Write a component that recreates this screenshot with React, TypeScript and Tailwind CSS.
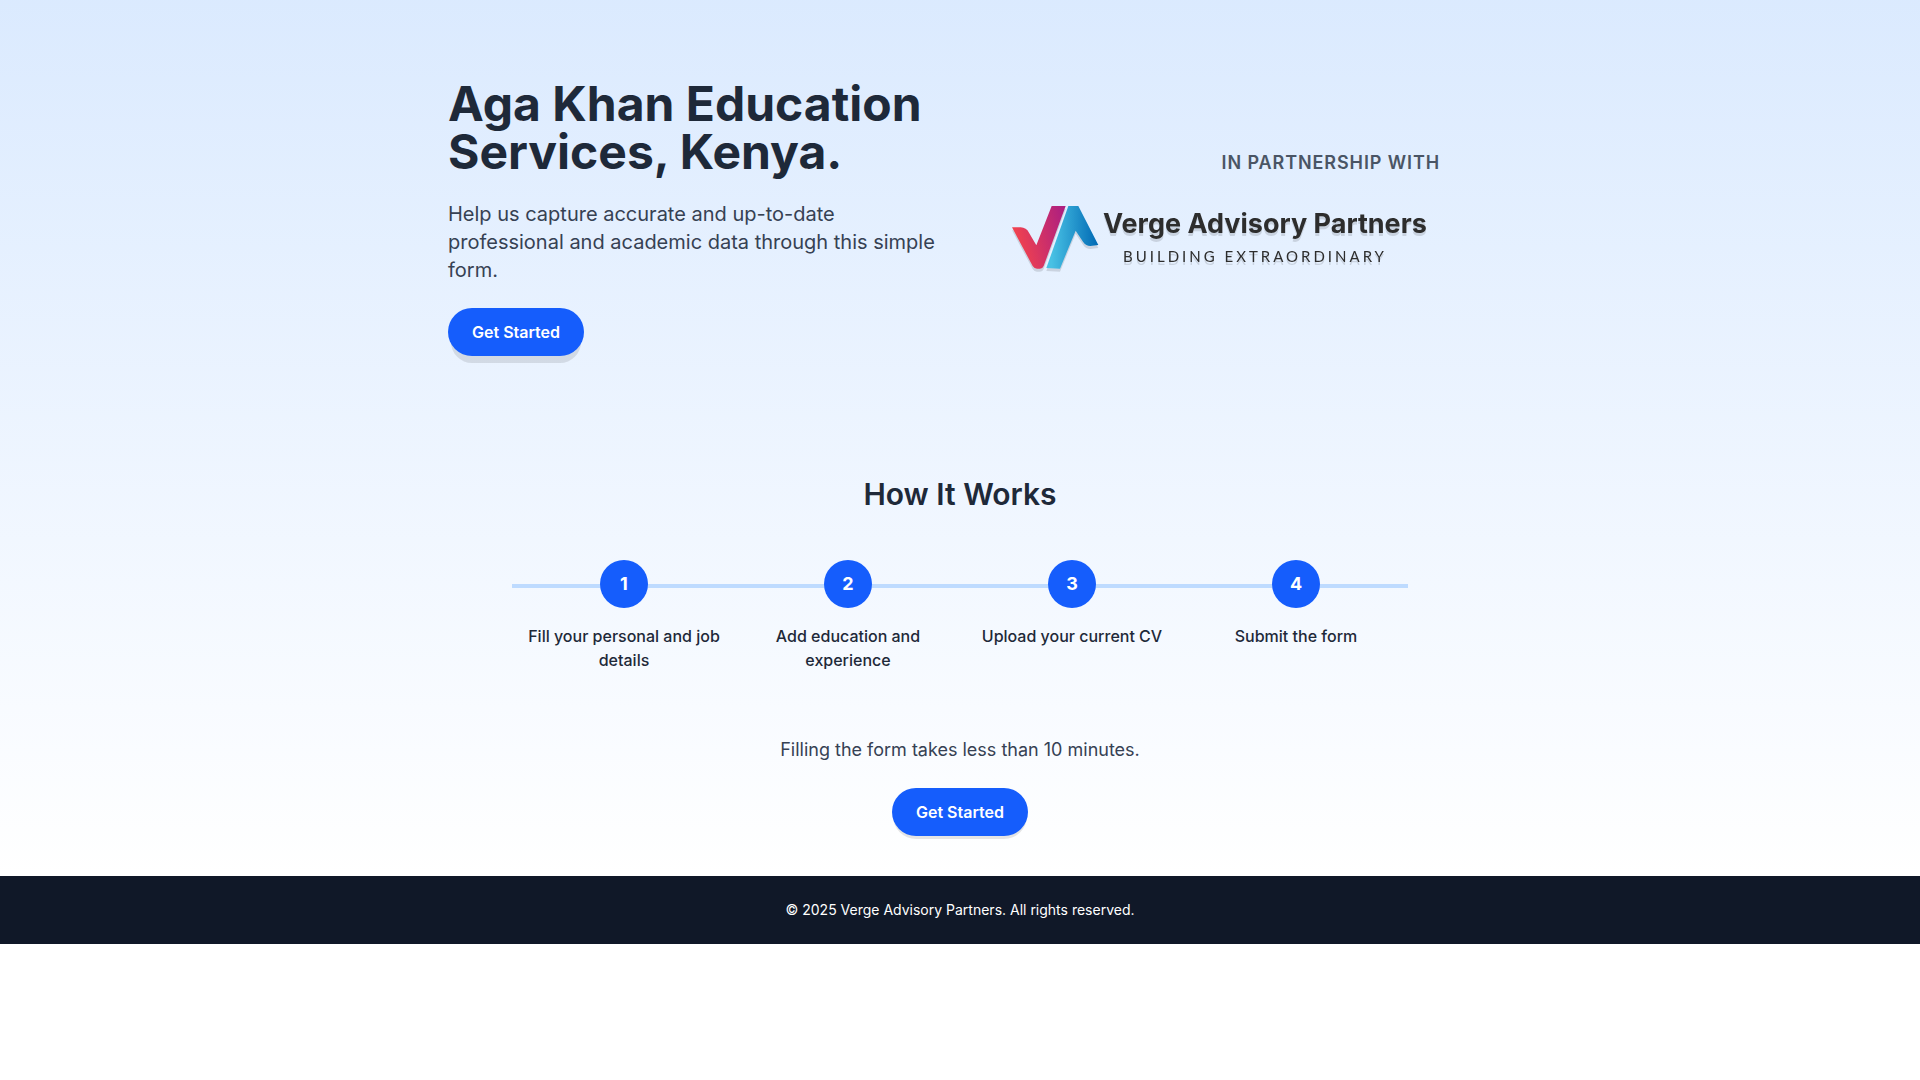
type Step = {
  id: number;
  label: string;
};

const steps: Step[] = [
  { id: 1, label: 'Fill your personal and job details' },
  { id: 2, label: 'Add education and experience' },
  { id: 3, label: 'Upload your current CV' },
  { id: 4, label: 'Submit the form' },
];

const VergeMark = () => {
  return (
    <svg viewBox="0 0 261 204" className="w-[87px] h-[68px] shrink-0" aria-hidden="true">
      <defs>
        <linearGradient id="vergeRed" x1="0" y1="0.5" x2="1" y2="0.2">
          <stop offset="0" stopColor="#f5444c" />
          <stop offset="1" stopColor="#ad1f80" />
        </linearGradient>
        <linearGradient id="vergeBlue" x1="0" y1="0" x2="1" y2="0">
          <stop offset="0.1" stopColor="#48c1e4" />
          <stop offset="1" stopColor="#0069b4" />
        </linearGradient>
      </defs>
      <path fill="url(#vergeRed)" d="M0 64 L26 64 Q43 65 51 80 L73 118 L119 0 L161 0 L95 180 Q92 188 84 188 L75 188 Q67 188 62 180 Z" />
      <path fill="url(#vergeBlue)" d="M169 0 L199 0 L259 117 L235 120 Q222 120 213 107 L191 74 L144 188 L103 186 Z" />
    </svg>
  );
};

const PartnerLogo = () => {
  return (
    <div className="mt-4 h-[94px] pl-17 flex items-center gap-1 drop-shadow-[0_3px_0_rgba(0,0,0,0.12)]">
      <VergeMark />
      <div className="flex flex-col gap-2 text-[#2d2d2d]">
        <div className="text-[27px] leading-6 font-bold whitespace-nowrap">Verge Advisory Partners</div>
        <div className="pl-5 font-['Lato',sans-serif] text-[15px] leading-6 tracking-[0.2em] whitespace-nowrap">BUILDING EXTRAORDINARY</div>
      </div>
    </div>
  );
};

const Hero = () => {
  return (
    <section className="max-w-5xl mx-auto pr-8 py-20 flex items-center justify-between">
      <div className="w-1/2">
        <h1 className="text-5xl leading-none font-bold text-gray-800">Aga Khan Education Services, Kenya.</h1>
        <p className="mt-6 text-xl text-gray-700">
          Help us capture accurate and up-to-date professional and academic data through this simple form.
        </p>
        <button type="button" className="mt-6 px-6 py-3 rounded-full bg-blue-600 text-white font-semibold shadow-[0_10px_0_-3px_rgba(0,0,0,0.1)]">
          Get Started
        </button>
      </div>
      <div className="w-1/2">
        <p className="text-right text-lg font-semibold text-gray-600 tracking-wider">IN PARTNERSHIP WITH</p>
        <PartnerLogo />
      </div>
    </section>
  );
};

const HowItWorks = () => {
  return (
    <section className="max-w-4xl mx-auto pt-10 text-center">
      <h2 className="text-3xl font-semibold text-gray-800">How It Works</h2>
      <div className="relative mt-12">
        <div className="absolute top-6 left-0 right-0 h-1 bg-blue-200" />
        <ol className="relative grid grid-cols-4">
          {steps.map((step) => (
            <li key={step.id} className="px-4 flex flex-col items-center">
              <div className="w-12 h-12 rounded-full bg-blue-600 text-white text-lg font-bold flex items-center justify-center">
                {step.id}
              </div>
              <p className="mt-4 font-medium text-gray-800">{step.label}</p>
            </li>
          ))}
        </ol>
      </div>
    </section>
  );
};

const App = () => {
  return (
    <div className="font-['Inter',sans-serif] bg-white">
      <main className="bg-gradient-to-b from-blue-100 to-white">
        <Hero />
        <HowItWorks />
        <section className="pt-16 pb-10 text-center">
          <p className="text-lg text-gray-700">Filling the form takes less than 10 minutes.</p>
          <button type="button" className="mt-6 px-6 py-3 rounded-full bg-blue-600 text-white font-semibold shadow-[0_4px_0_-1px_rgba(0,0,0,0.1)]">
            Get Started
          </button>
        </section>
      </main>
      <footer className="bg-gray-900 text-white text-sm text-center py-6">
        © 2025 Verge Advisory Partners. All rights reserved.
      </footer>
    </div>
  );
};

export default App;
